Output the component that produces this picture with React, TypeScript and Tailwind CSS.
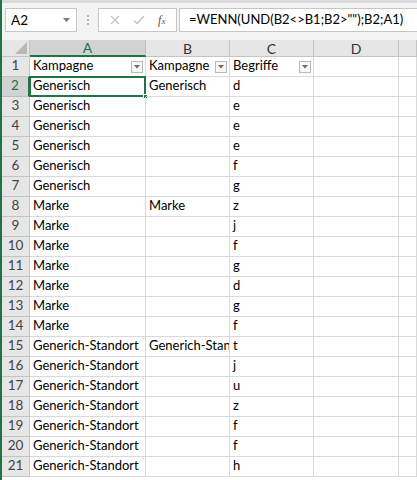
import React from "react"

const rows: [string, string, string][] = [
  ["Kampagne", "Kampagne", "Begriffe"],
  ["Generisch", "Generisch", "d"],
  ["Generisch", "", "e"],
  ["Generisch", "", "e"],
  ["Generisch", "", "e"],
  ["Generisch", "", "f"],
  ["Generisch", "", "g"],
  ["Marke", "Marke", "z"],
  ["Marke", "", "j"],
  ["Marke", "", "f"],
  ["Marke", "", "g"],
  ["Marke", "", "d"],
  ["Marke", "", "g"],
  ["Marke", "", "f"],
  ["Generich-Standort", "Generich-Standort", "t"],
  ["Generich-Standort", "", "j"],
  ["Generich-Standort", "", "u"],
  ["Generich-Standort", "", "z"],
  ["Generich-Standort", "", "f"],
  ["Generich-Standort", "", "f"],
  ["Generich-Standort", "", "h"],
]

const font = { fontFamily: "Lato, 'Liberation Sans', sans-serif" }

function FilterBtn() {
  return (
    <span className="absolute right-[2px] bottom-[3px] w-[12px] h-[12px] border border-[#b9b9b9] bg-[#f7f7f7] flex items-center justify-center">
      <svg width="6" height="4" viewBox="0 0 6 4">
        <path d="M0 0h6L3 3.5z" fill="#6d6d6d" />
      </svg>
    </span>
  )
}

export default function App() {
  return (
    <div className="w-[417px] h-[480px] overflow-hidden bg-white flex text-black" style={font}>
      <div className="w-[2px] bg-[#217346] shrink-0" />
      <div className="flex-1 flex flex-col min-w-0">
        {/* formula bar */}
        <div className="h-[40px] bg-[#f3f3f3] border-t-[3px] border-[#dadada] flex items-start pt-[5px] shrink-0">
          <div className="ml-[3px] w-[72px] h-[24px] bg-white border border-[#c6c6c6] flex items-center pl-[5px] pr-[6px] text-[13.5px]">
            <span className="flex-1">A2</span>
            <svg width="7" height="4" viewBox="0 0 7 4">
              <path d="M0 0h7L3.5 4z" fill="#7a7a7a" />
            </svg>
          </div>
          <div className="w-[21px] h-[24px] flex flex-col items-center justify-center gap-[2px]">
            <span className="w-[2px] h-[2px] bg-[#b5b5b5]" />
            <span className="w-[2px] h-[2px] bg-[#b5b5b5]" />
            <span className="w-[2px] h-[2px] bg-[#b5b5b5]" />
          </div>
          <div className="w-[79px] h-[24px] bg-white border border-[#c6c6c6] flex items-center justify-around px-[4px]">
            <svg width="10" height="10" viewBox="0 0 10 10">
              <path d="M1 1l8 8M9 1l-8 8" stroke="#c0c0c0" strokeWidth="1.2" />
            </svg>
            <svg width="12" height="10" viewBox="0 0 12 10">
              <path d="M1 5.5l3 3L11 1" stroke="#c0c0c0" strokeWidth="1.3" fill="none" />
            </svg>
            <span className="text-[12px] italic text-[#555]" style={{ fontFamily: "'Liberation Serif', serif" }}>
              f<span className="text-[9px]">x</span>
            </span>
          </div>
          <div className="ml-[2px] flex-1 h-[24px] bg-white border border-[#c6c6c6] border-r-0 flex items-center pl-[9px] text-[13px] whitespace-nowrap overflow-hidden">
            =WENN(UND(B2&lt;&gt;B1;B2&gt;"");B2;A1)
          </div>
        </div>

        {/* sheet */}
        <div className="grid grid-cols-[28px_116px_84px_84px_85px_1fr] grid-rows-[17px] auto-rows-[20px] text-[13px]">
          {/* header row */}
          <div className="bg-[#e6e6e6] border-r border-b border-[#c4c4c4] relative overflow-hidden">
            <svg className="absolute right-[2px] bottom-[2px]" width="12" height="12" viewBox="0 0 12 12">
              <path d="M12 0V12H0z" fill="#b8b8b8" />
            </svg>
          </div>
          {["A", "B", "C", "D", ""].map((c, i) => (
            <div
              key={i}
              className={
                i === 0
                  ? "bg-[#d2d2d2] border-r border-[#bdbdbd] border-b-2 border-b-[#217346] text-[#217346] flex items-center justify-center text-[14px]"
                  : "bg-[#e6e6e6] border-r border-b border-[#c4c4c4] text-[#333] flex items-center justify-center text-[14px]"
              }
            >
              {c}
            </div>
          ))}

          {rows.map((r, ri) => {
            const sel = ri === 1
            return (
              <React.Fragment key={ri}>
                <div
                  className={
                    sel
                      ? "bg-[#d2d2d2] border-r-2 border-r-[#217346] border-b border-b-[#bdbdbd] text-[#217346] flex items-end justify-center pb-[1px] text-[13.5px]"
                      : "bg-[#e6e6e6] border-r border-b border-[#c4c4c4] text-[#444] flex items-end justify-center pb-[1px] text-[13.5px]"
                  }
                >
                  {ri + 1}
                </div>
                {[r[0], r[1], r[2], "", ""].map((v, ci) => (
                  <div
                    key={ci}
                    className={
                      "relative border-r border-b border-[#dadada] flex items-end pl-[3px] pb-[1px] whitespace-nowrap " +
                      (sel && ci === 0 ? "" : "overflow-hidden")
                    }
                  >
                    {v}
                    {ri === 0 && ci < 3 && <FilterBtn />}
                    {sel && ci === 0 && (
                      <>
                        <span className="absolute -top-[1px] -left-[1px] -right-[1px] -bottom-[1px] border-2 border-[#217346]" />
                        <span className="absolute -right-[3px] -bottom-[3px] w-[5px] h-[5px] bg-[#217346] border border-white" />
                      </>
                    )}
                  </div>
                ))}
              </React.Fragment>
            )
          })}
        </div>
      </div>
    </div>
  )
}
